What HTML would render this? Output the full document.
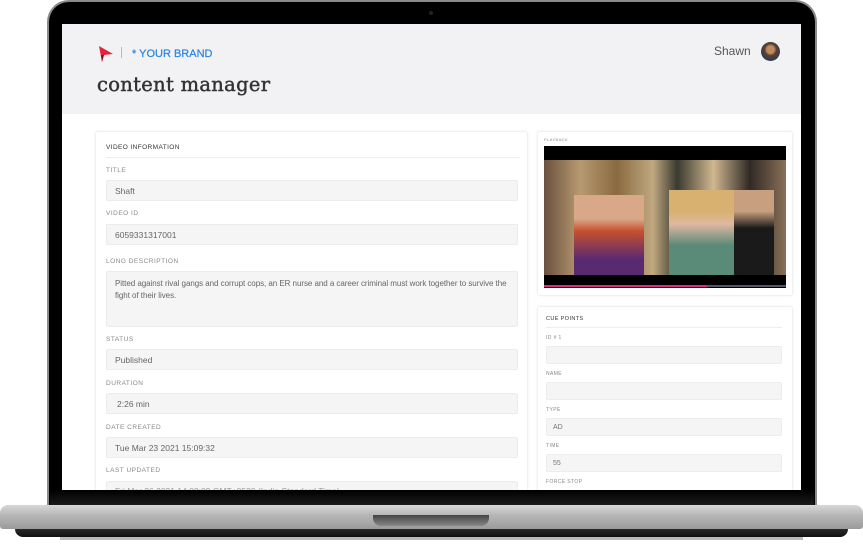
<!DOCTYPE html>
<html><head><meta charset="utf-8"><style>
*{margin:0;padding:0;box-sizing:border-box}
body{width:863px;height:545px;background:#fff;position:relative;overflow:hidden;font-family:"Liberation Sans",sans-serif}
.abs{position:absolute}
.lbl{position:absolute;font-size:6.5px;letter-spacing:.5px;color:#888}
.inp{position:absolute;background:#f5f5f5;border:1px solid #ececec;border-radius:2px;font-size:8.5px;color:#666;padding-left:8px;display:flex;align-items:center}
.rl{position:absolute;font-size:5px;letter-spacing:.4px;color:#888}
.ri{position:absolute;background:#f5f5f5;border:1px solid #ededed;border-radius:2px;font-size:7px;color:#777;padding-left:6px;display:flex;align-items:center}
</style></head><body>
<div class="abs" style="left:47px;top:0;width:770px;height:508px;background:#000;border-radius:22px 22px 0 0;border:2px solid #8a8a8a;border-bottom:none"></div>
<div class="abs" style="left:429px;top:11px;width:4px;height:4px;border-radius:50%;background:#222"></div>
<div class="abs" style="left:62px;top:24px;width:739px;height:466px;background:#fff;overflow:hidden">
  <div class="abs" style="left:0;top:0;width:739px;height:90px;background:#f2f2f4"></div>
  <svg class="abs" style="left:35px;top:21px" width="18" height="18" viewBox="0 0 18 18"><path d="M2 1 L16 9 L7 10 L5 17 Z" fill="#e8213a"/><path d="M7 10 L5 17 L4 10Z" fill="#8a0f1c"/></svg>
  <div class="abs" style="left:59px;top:23px;width:1px;height:11px;background:#bbb"></div>
  <div class="abs" style="left:70px;top:24px;font-size:11px;color:#2f86e0;-webkit-text-stroke:0.25px #2f86e0">* YOUR BRAND</div>
  <div class="abs" style="left:35px;top:49px;font-family:'DejaVu Serif',serif;font-size:19.5px;color:#333;-webkit-text-stroke:0.45px #333;letter-spacing:.3px">content manager</div>
  <div class="abs" style="left:652px;top:20px;font-size:12px;color:#555">Shawn</div>
  <div class="abs" style="left:699px;top:18px;width:19px;height:19px;border-radius:50%;background:radial-gradient(circle at 50% 40%,#c08a60 0 25%,#5a4030 40%,#2c3a55 75%)"></div>

  <div class="abs" style="left:33px;top:107px;width:433px;height:370px;background:#fff;border:1px solid #f0f0f0;border-radius:3px;box-shadow:0 0 3px rgba(0,0,0,.05)"></div>
  <div class="abs" style="left:44px;top:120px;font-size:6.5px;letter-spacing:.4px;color:#333">VIDEO INFORMATION</div>
  <div class="abs" style="left:44px;top:133px;width:414px;height:1px;background:#eee"></div>
  <div class="lbl" style="left:44px;top:143px">TITLE</div>
  <div class="inp" style="left:44px;top:156px;width:412px;height:21px">Shaft</div>
  <div class="lbl" style="left:44px;top:186px">VIDEO ID</div>
  <div class="inp" style="left:44px;top:200px;width:412px;height:21px">6059331317001</div>
  <div class="lbl" style="left:44px;top:234px">LONG DESCRIPTION</div>
  <div class="inp" style="left:44px;top:247px;width:412px;height:56px;align-items:flex-start;padding-top:6px;line-height:12px;font-size:8px;letter-spacing:-.05px">Pitted against rival gangs and corrupt cops, an ER nurse and a career criminal must work together to survive the fight of their lives.</div>
  <div class="lbl" style="left:44px;top:312px">STATUS</div>
  <div class="inp" style="left:44px;top:325px;width:412px;height:21px">Published</div>
  <div class="lbl" style="left:44px;top:356px">DURATION</div>
  <div class="inp" style="left:44px;top:369px;width:412px;height:21px;padding-left:10px">2:26 min</div>
  <div class="lbl" style="left:44px;top:400px">DATE CREATED</div>
  <div class="inp" style="left:44px;top:413px;width:412px;height:21px">Tue Mar 23 2021 15:09:32</div>
  <div class="lbl" style="left:44px;top:443px">LAST UPDATED</div>
  <div class="inp" style="left:44px;top:457px;width:412px;height:21px;align-items:flex-start;padding-top:4px;color:#999">Fri Mar 26 2021 14:08:09 GMT+0530 (India Standard Time)</div>

  <div class="abs" style="left:475px;top:107px;width:256px;height:165px;background:#fff;border:1px solid #f0f0f0;border-radius:3px;box-shadow:0 0 3px rgba(0,0,0,.05)"></div>
  <div class="rl" style="left:482px;top:113px;font-size:4px">PLAYBACK</div>
  <div class="abs" style="left:482px;top:122px;width:242px;height:142px;background:#000">
    <div class="abs" style="left:0;top:14px;width:242px;height:115px;background:linear-gradient(90deg,#6a5040 0%,#b89a70 15%,#8a6a40 30%,#c0a880 45%,#3a3a30 55%,#d0b890 70%,#302a25 85%,#8a7058 100%)">
      <div class="abs" style="left:30px;top:35px;width:70px;height:80px;background:linear-gradient(180deg,#d8a888 0 30%,#c85030 45%,#5a2a70 80%)"></div>
      <div class="abs" style="left:125px;top:30px;width:70px;height:85px;background:linear-gradient(180deg,#d8b070 0 25%,#e0b8a0 40%,#5a8a78 65%)"></div>
      <div class="abs" style="left:190px;top:30px;width:40px;height:85px;background:linear-gradient(180deg,#c8a080 0 25%,#1a1a1a 45%)"></div>
    </div>
    <div class="abs" style="left:0;top:139px;width:163px;height:2px;background:#e02a7a"></div>
    <div class="abs" style="left:163px;top:139px;width:79px;height:2px;background:#556"></div>
  </div>

  <div class="abs" style="left:475px;top:282px;width:256px;height:200px;background:#fff;border:1px solid #f0f0f0;border-radius:3px;box-shadow:0 0 3px rgba(0,0,0,.05)"></div>
  <div class="abs" style="left:484px;top:292px;font-size:5.5px;letter-spacing:.4px;color:#333">CUE POINTS</div>
  <div class="abs" style="left:484px;top:303px;width:236px;height:1px;background:#eee"></div>
  <div class="rl" style="left:484px;top:311px">ID # 1</div>
  <div class="ri" style="left:484px;top:322px;width:236px;height:18px"></div>
  <div class="rl" style="left:484px;top:347px">NAME</div>
  <div class="ri" style="left:484px;top:358px;width:236px;height:18px"></div>
  <div class="rl" style="left:484px;top:383px">TYPE</div>
  <div class="ri" style="left:484px;top:394px;width:236px;height:18px">AD</div>
  <div class="rl" style="left:484px;top:419px">TIME</div>
  <div class="ri" style="left:484px;top:430px;width:236px;height:18px">55</div>
  <div class="rl" style="left:484px;top:455px">FORCE STOP</div>
</div>
<div class="abs" style="left:50px;top:490px;width:764px;height:16px;background:linear-gradient(#000,#1c1c1c)"></div>
<div class="abs" style="left:0;top:505px;width:863px;height:24px;border-radius:8px 8px 3px 3px;background:linear-gradient(#d8d8d8 0%,#b8b8b8 40%,#9a9a9a 100%)"></div>
<div class="abs" style="left:373px;top:515px;width:116px;height:11px;border-radius:0 0 8px 8px;background:linear-gradient(#444,#888)"></div>
<div class="abs" style="left:15px;top:529px;width:833px;height:8px;background:linear-gradient(#2a2a2a,#111);border-radius:0 0 40px 40px"></div>
<div class="abs" style="left:60px;top:537px;width:743px;height:3px;background:#555;opacity:.4"></div>
</body></html>
